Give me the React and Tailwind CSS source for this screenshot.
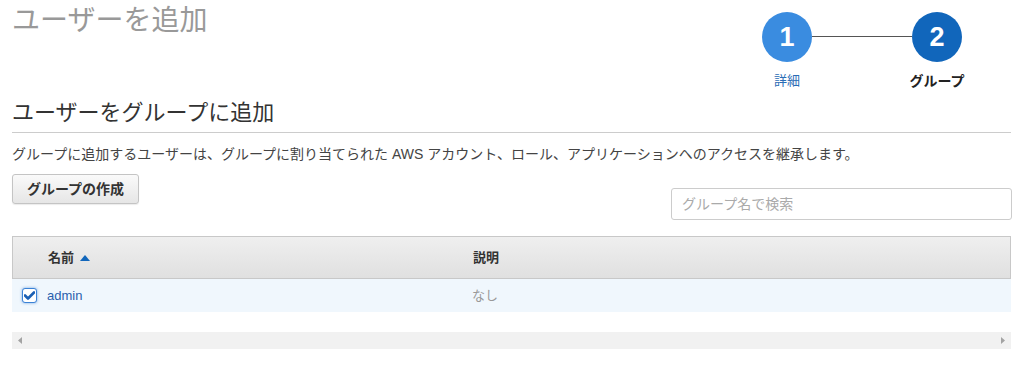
import React from "react";

const font = { fontFamily: '"Liberation Sans", "Noto Sans CJK JP", sans-serif' };

function Step({ n, label, active }) {
  return (
    <div className="flex flex-col items-center w-[50px]">
      <div
        className={
          "w-[50px] h-[50px] rounded-full flex items-center justify-center text-white font-bold text-[27px] " +
          (active ? "bg-[#1166bb]" : "bg-[#3a8ce0]")
        }
      >
        {n}
      </div>
      <div
        className={
          "mt-[9px] whitespace-nowrap leading-[20px] " +
          (active ? "text-[#222] font-bold text-[14px]" : "text-[#2a6cb5] text-[13px]")
        }
      >
        {label}
      </div>
    </div>
  );
}

export default function App() {
  return (
    <div className="bg-white w-[1023px] h-[365px] px-3 overflow-hidden" style={font}>
      <div className="flex justify-between h-[98px]">
        <h1 className="mt-[4px] text-[28px] leading-[34px] text-[#999]">ユーザーを追加</h1>
        <div className="flex items-start mt-[12px] mr-[49px]">
          <Step n="1" label="詳細" />
          <div className="w-[100px] h-px bg-[#555] mt-[24px]" />
          <Step n="2" label="グループ" active />
        </div>
      </div>

      <h2 className="text-[22px] leading-[30px] text-[#333] pb-[4px] border-b border-[#ccc]">
        ユーザーをグループに追加
      </h2>

      <p className="mt-[11px] text-[14px] leading-[20px] text-[#444]">
        グループに追加するユーザーは、グループに割り当てられた AWS アカウント、ロール、アプリケーションへのアクセスを継承します。
      </p>

      <div className="flex justify-between items-start mt-[10px]">
        <button className="h-[30px] w-[127px] rounded-[3px] border border-[#c4c4c4] bg-gradient-to-b from-[#fafafa] to-[#e6e6e6] text-[14px] font-bold text-[#333] shadow-[0_1px_1px_rgba(0,0,0,0.08)]">
          グループの作成
        </button>
        <input
          className="mt-[14px] mr-[-1px] w-[341px] h-[32px] rounded-[3px] border border-[#ccc] px-[10px] text-[14px] outline-none placeholder:text-[#aaa]"
          placeholder="グループ名で検索"
        />
      </div>

      <div className="mt-[16px]">
        <div className="grid grid-cols-[35px_425px_1fr] h-[43px] items-center border border-[#c8c8c8] bg-gradient-to-b from-[#efefef] to-[#e0e0e0] text-[13px] font-bold text-[#333]">
          <div />
          <div className="flex items-center gap-[6px]">
            名前
            <svg width="10" height="6" viewBox="0 0 10 6">
              <path d="M0 6 L5 0 L10 6 Z" fill="#1166bb" />
            </svg>
          </div>
          <div>説明</div>
        </div>
        <div className="grid grid-cols-[35px_425px_1fr] h-[33px] items-center bg-[#f0f7fd] text-[13px]">
          <div className="pl-[10px] flex items-center">
            <div className="w-[15px] h-[15px] rounded-[3px] border border-[#3b82d6] bg-white flex items-center justify-center shadow-[0_0_3px_rgba(59,130,214,0.7)]">
              <svg width="11" height="9" viewBox="0 0 11 9">
                <path d="M1 4.5 L4 7.5 L10 1.5" stroke="#1a5fb4" strokeWidth="2.6" fill="none" strokeLinecap="round" strokeLinejoin="round" />
              </svg>
            </div>
          </div>
          <div className="text-[#2b5fad]">admin</div>
          <div className="text-[#999]">なし</div>
        </div>
      </div>

      <div className="mt-[20px] h-[17px] bg-[#f1f1f1] flex items-center justify-between px-[6px]">
        <svg width="4" height="7" viewBox="0 0 4 7">
          <path d="M4 0 L0 3.5 L4 7 Z" fill="#a3a3a3" />
        </svg>
        <svg width="4" height="7" viewBox="0 0 4 7">
          <path d="M0 0 L4 3.5 L0 7 Z" fill="#a3a3a3" />
        </svg>
      </div>
    </div>
  );
}
